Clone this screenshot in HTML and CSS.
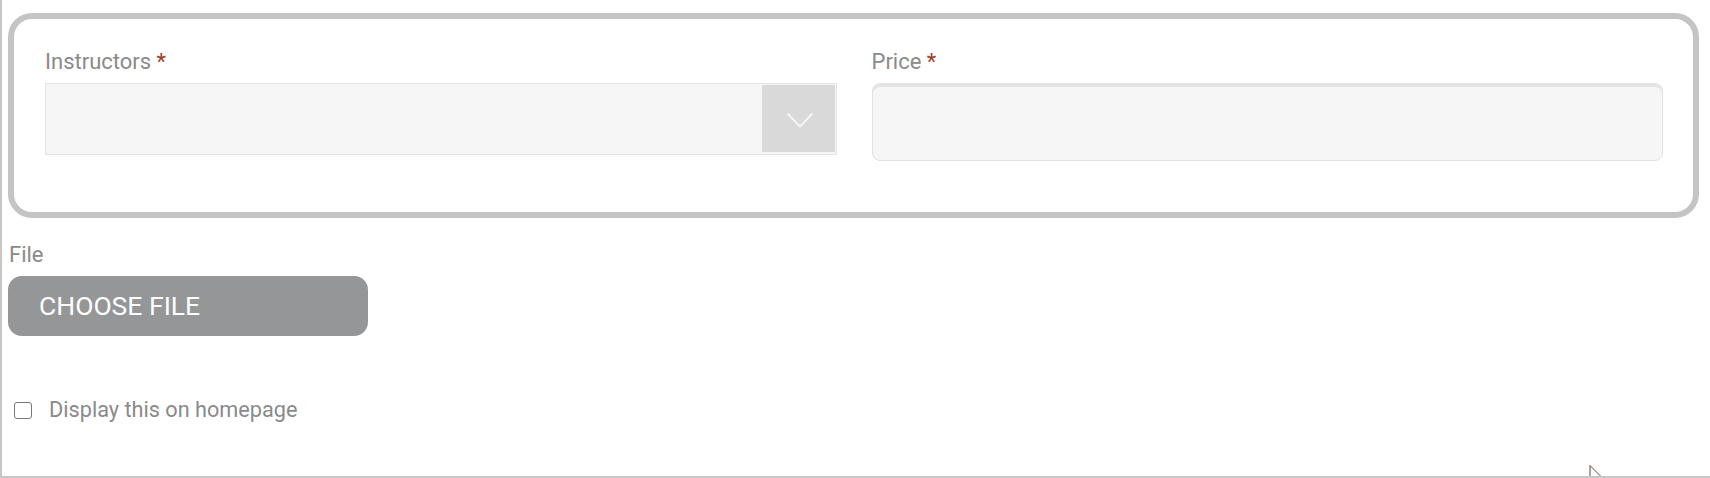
FILE: index.html
```html
<!DOCTYPE html>
<html lang="en">
<head>
<meta charset="utf-8">
<title>Form</title>
<link rel="stylesheet" href="styles.css">
</head>
<body>
<div class="frame">
  <section class="card">
    <div class="field">
      <label class="label">Instructors <span class="req">*</span></label>
      <div class="select">
        <div class="select-value"></div>
        <div class="select-btn">
          <svg width="28" height="17" viewBox="0 0 28 17"><polyline points="1.5,1.5 14,14.5 26.5,1.5" fill="none" stroke="#f4f4f4" stroke-width="2"/></svg>
        </div>
      </div>
    </div>
    <div class="field">
      <label class="label">Price <span class="req">*</span></label>
      <div class="input"></div>
    </div>
  </section>
  <div class="file-group">
    <div class="label">File</div>
    <button class="file-btn">CHOOSE FILE</button>
  </div>
  <label class="check-row">
    <span class="checkbox"></span>
    <span class="check-text">Display this on homepage</span>
  </label>
  <svg class="cursor" width="16" height="14" viewBox="0 0 16 14"><path d="M1 0.5 L1 14 M1 0.5 L12 11.5" fill="none" stroke="#6b3b3b" stroke-width="1"/></svg>
</div>
</body>
</html>
```
FILE: styles.css
```css
* { box-sizing: border-box; }
html, body { margin: 0; padding: 0; background: #fff; }
body { font-family: Roboto, "Liberation Sans", Arial, sans-serif; }

.frame {
  position: relative;
  height: 478px;
  border-left: 2px solid #c6c6c6;
  border-bottom: 2px solid #c6c6c6;
  padding-top: 13px;
  overflow: hidden;
}

.card {
  margin: 0 11px 0 6px;
  border: 6px solid #c4c4c4;
  border-radius: 24px;
  padding: 30px 30px 51px 31px;
  display: grid;
  grid-template-columns: 1fr 1fr;
  column-gap: 35px;
}

.field { display: flex; flex-direction: column; }

.label {
  font-size: 22px;
  line-height: 26px;
  color: #8a8a8a;
  margin-bottom: 8px;
}
.req { color: #9b3f2c; }

.select {
  height: 72px;
  background: #f6f6f6;
  border: 1px solid #e4e4e4;
  display: flex;
  padding: 1px 1px 2px 0;
}
.select-value { flex: 1; }
.select-btn {
  width: 73px;
  background: #d9d9d9;
  display: flex;
  align-items: center;
  justify-content: center;
  padding: 4px 0 0 3px;
}
.select-btn svg { display: block; }

.input {
  height: 78px;
  background: #f6f6f6;
  border: 1px solid #e2e2e2;
  border-radius: 8px;
  box-shadow: inset 0 3px 0 #e4e4e4;
}

.file-group {
  margin: 24px 0 0 7px;
}
.file-group .label { margin-bottom: 8px; }
.file-btn {
  display: block;
  width: 360px;
  height: 60px;
  margin-left: -1px;
  border: 0;
  border-radius: 14px;
  background: #959697;
  color: #ffffff;
  font-family: Roboto, "Liberation Sans", Arial, sans-serif;
  font-size: 26.5px;
  text-align: left;
  padding: 0 0 0 31px;
  line-height: 60px;
}

.check-row {
  display: flex;
  align-items: center;
  margin: 61px 0 0 12px;
  height: 26px;
}
.checkbox {
  width: 18px;
  height: 17px;
  border: 1.5px solid #777;
  border-radius: 3px;
  margin-right: 17px;
}
.check-text {
  font-size: 21.7px;
  line-height: 26px;
  color: #8a8a8a;
}

.cursor {
  position: absolute;
  left: 1587px;
  top: 465px;
}
```
